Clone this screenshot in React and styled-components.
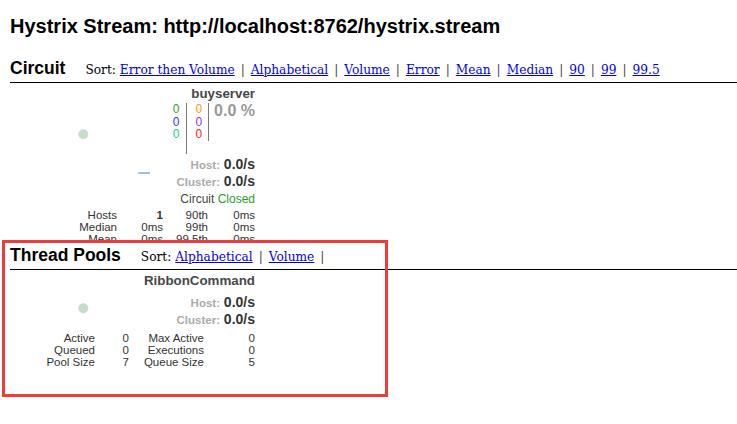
import React from 'react';
import styled, { createGlobalStyle } from 'styled-components';

const GlobalStyle = createGlobalStyle`
  html, body { margin: 0; padding: 0; background: #fff; }
  body { font-family: "Liberation Sans", Arial, sans-serif; color: #000; }
`;

const SANS = '"Liberation Sans", Arial, sans-serif';

const Page = styled.div`
  position: relative;
  padding: 14px 0 0 10px;
  height: 424px;
  box-sizing: border-box;
  overflow: hidden;
`;

const Title = styled.h2`
  margin: 0;
  font: bold 20px/24px ${SANS};
`;

const SectionHeader = styled.div`
  display: flex;
  align-items: baseline;
  margin-top: ${(p) => p.$mt || 0}px;
  padding: 2px 0 3px;
  border-bottom: 1px solid #000;
  background: #fff;
`;

const SectionTitle = styled.h3`
  margin: 0;
  font: bold 17.5px/22px ${SANS};
`;

const SortMenu = styled.div`
  margin-left: 20px;
  font: 12.2px/18px "DejaVu Serif", serif;
  color: #000;
`;

const SortLink = styled.a`
  color: #0000ee;
  text-decoration: underline;
  cursor: pointer;
`;

const Sep = styled.span`
  display: inline-block;
  padding: 0 6px;
  color: #444;
`;

const MonitorList = styled.div`
  display: flex;
  flex-wrap: wrap;
  height: ${(p) => (p.$h ? `${p.$h}px` : 'auto')};
  overflow: hidden;
`;

const Monitor = styled.div`
  position: relative;
  width: 245px;
  padding-top: 3px;
  color: #333;
`;

const Chart = styled.svg`
  position: absolute;
  left: 0;
  top: 0;
`;

const Data = styled.div`
  position: relative;
  text-align: right;
`;

const Name = styled.div`
  font: bold 13.33px/16px ${SANS};
  color: #474747;
  white-space: nowrap;
`;

const Counters = styled.div`
  display: flex;
  justify-content: flex-end;
  align-items: flex-start;
  margin-top: 1px;
  font: 12px/12.67px ${SANS};
`;

const CounterCol = styled.div`
  display: flex;
  flex-direction: column;
  align-items: flex-end;
  padding: 0 ${(p) => p.$pr}px ${(p) => p.$pb || 0}px ${(p) => p.$pl || 0}px;
  border-right: 1px solid #7a7a7a;
`;

const Count = styled.span`
  color: ${(p) => p.$c};
`;

const ErrorPct = styled.div`
  padding-left: 5px;
  font: bold 16px/16px ${SANS};
  color: #999;
  white-space: nowrap;
`;

const Rate = styled.div`
  margin-top: ${(p) => p.$mt || 0}px;
  font: bold 14px/17px ${SANS};
  color: #333;
  white-space: nowrap;
`;

const RateLabel = styled.span`
  font-size: 11.5px;
  line-height: 1;
  color: #aaa;
`;

const Status = styled.div`
  margin-top: 1.5px;
  font: 12px/14px ${SANS};
  color: #474747;
`;

const Closed = styled.span`
  color: #2e9a2e;
`;

const Stats = styled.div`
  display: grid;
  grid-template-columns: ${(p) => p.$cols};
  margin-top: ${(p) => p.$mt || 0}px;
  font: 11.5px/12px ${SANS};
  color: #333;
  text-align: right;
`;

const Cell = styled.div`
  font-weight: ${(p) => (p.$bold ? 'bold' : 'normal')};
  white-space: nowrap;
`;

const Highlight = styled.div`
  position: absolute;
  left: 2px;
  top: 240px;
  width: 386px;
  height: 157px;
  box-sizing: border-box;
  border: 3px solid #f03b3b;
  pointer-events: none;
`;

function SortBar({ items, trailing }) {
  return (
    <SortMenu>
      Sort:{' '}
      {items.map((it, i) => (
        <React.Fragment key={it}>
          <SortLink>{it}</SortLink>
          {(i < items.length - 1 || trailing) && <Sep>|</Sep>}
        </React.Fragment>
      ))}
    </SortMenu>
  );
}

const circuitStats = [
  ['Hosts', '1', '90th', '0ms', true],
  ['Median', '0ms', '99th', '0ms'],
  ['Mean', '0ms', '99.5th', '0ms'],
];

const poolStats = [
  ['Active', '0', 'Max Active', '0'],
  ['Queued', '0', 'Executions', '0'],
  ['Pool Size', '7', 'Queue Size', '5'],
];

function StatRows({ rows, cols, mt }) {
  return (
    <Stats $cols={cols} $mt={mt}>
      {rows.map(([a, b, c, d, bold]) => (
        <React.Fragment key={a}>
          <Cell>{a}</Cell>
          <Cell $bold={bold}>{b}</Cell>
          <Cell>{c}</Cell>
          <Cell>{d}</Cell>
        </React.Fragment>
      ))}
    </Stats>
  );
}

export default function App() {
  return (
    <>
      <GlobalStyle />
      <Page>
        <Title>Hystrix Stream: http://localhost:8762/hystrix.stream</Title>

        <SectionHeader $mt={17}>
          <SectionTitle>Circuit</SectionTitle>
          <SortBar
            items={['Error then Volume', 'Alphabetical', 'Volume', 'Error', 'Mean', 'Median', '90', '99', '99.5']}
          />
        </SectionHeader>

        <MonitorList $h={159}>
          <Monitor>
            <Chart width="245" height="140">
              <circle cx="73.3" cy="51.3" r="5" fill="#c9dcc9" />
              <line x1="128.3" y1="90" x2="140" y2="90" stroke="#86a8cc" strokeWidth="1.5" />
            </Chart>
            <Data>
              <Name>buyserver</Name>
              <Counters>
                <CounterCol $pr={7} $pb={13}>
                  <Count $c="#2f9e2f">0</Count>
                  <Count $c="#3333ff">0</Count>
                  <Count $c="#19c99a">0</Count>
                </CounterCol>
                <CounterCol $pl={8} $pr={6}>
                  <Count $c="#ff9900">0</Count>
                  <Count $c="#9933cc">0</Count>
                  <Count $c="#ff2222">0</Count>
                </CounterCol>
                <ErrorPct>0.0 %</ErrorPct>
              </Counters>
              <Rate $mt={2}>
                <RateLabel>Host:</RateLabel> 0.0/s
              </Rate>
              <Rate>
                <RateLabel>Cluster:</RateLabel> 0.0/s
              </Rate>
              <Status>
                Circuit <Closed>Closed</Closed>
              </Status>
            </Data>
            <StatRows rows={circuitStats} cols="107px 46px 45px 47px" mt={3} />
          </Monitor>
        </MonitorList>

        <SectionHeader>
          <SectionTitle>Thread Pools</SectionTitle>
          <SortBar items={['Alphabetical', 'Volume']} trailing />
        </SectionHeader>

        <MonitorList>
          <Monitor>
            <Chart width="245" height="80">
              <circle cx="73.3" cy="38.3" r="5" fill="#c9dcc9" />
            </Chart>
            <Data>
              <Name>RibbonCommand</Name>
              <Rate $mt={5}>
                <RateLabel>Host:</RateLabel> 0.0/s
              </Rate>
              <Rate>
                <RateLabel>Cluster:</RateLabel> 0.0/s
              </Rate>
            </Data>
            <StatRows rows={poolStats} cols="85px 34px 75px 51px" mt={4} />
          </Monitor>
        </MonitorList>

        <Highlight />
      </Page>
    </>
  );
}
